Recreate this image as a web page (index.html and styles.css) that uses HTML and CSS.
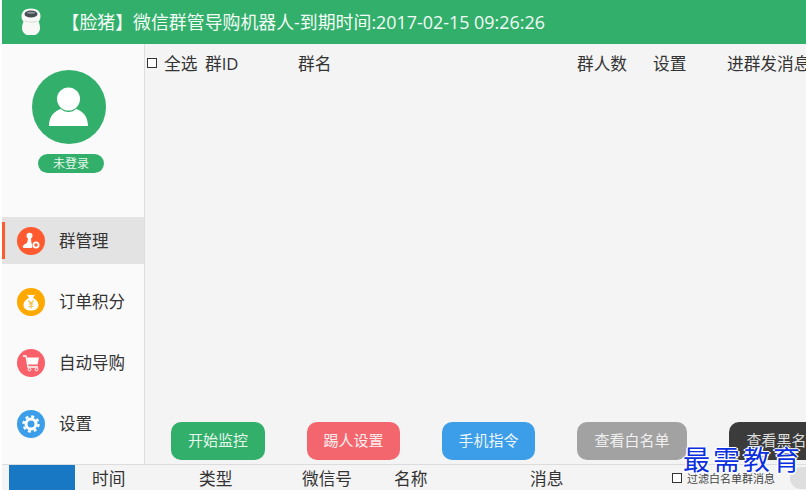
FILE: index.html
```html
<!DOCTYPE html>
<html lang="zh">
<head>
<meta charset="utf-8">
<title>脸猪</title>
<link rel="stylesheet" href="styles.css">
</head>
<body>
<div class="app">
  <header class="topbar">
    <svg class="logo" width="22" height="28" viewBox="0 0 22 28">
      <path d="M11 .5c6 0 9.500 3 9.500 7.500 0 3-1 4.500-2 5.500 1 2 1.500 4.500 1.500 7 0 3-2 5-4.500 6.500h-9C4 25.500 2 23.500 2 20.500c0-2.500.5-5 1.500-7-1-1-2-2.500-2-5.500C1.500 3.500 5 .5 11 .5z" fill="#f8f8f6"/>
      <path d="M5.500 12.500c3 1.500 8 1.500 11 0l.8 1c-3.500 1.600-9 1.600-12.600 0z" fill="#d9dedb"/>
      <ellipse cx="11" cy="6" rx="6.500" ry="3.600" fill="#454f53"/>
      <ellipse cx="11" cy="4.800" rx="4" ry="1" fill="#8d9699"/>
    </svg>
    <h1 class="title">【脸猪】微信群管导购机器人-到期时间:2017-02-15 09:26:26</h1>
  </header>
  <div class="middle">
    <aside class="sidebar">
      <div class="profile">
        <svg class="avatar" width="74" height="74" viewBox="0 0 74 74">
          <circle cx="37" cy="37" r="37" fill="#32af6b"/>
          <circle cx="36.500" cy="29" r="11.500" fill="#fff"/>
          <path d="M17 56c0-10 6-15.500 12-17 2 2 4.500 3 7.500 3s5.500-1 7.500-3c6 1.500 12 7 12 17z" fill="#fff"/>
        </svg>
        <span class="login">未登录</span>
      </div>
      <nav class="menu">
        <a class="menu-row active">
          <span class="icon icon-red">
            <svg width="28" height="28" viewBox="0 0 28 28"><circle cx="12.500" cy="8.800" r="3" fill="#fff"/><path d="M11 11h3l.3 4 1 4c.3 1.300-.3 2-1.200 2H7c-1 0-1.500-.8-1.200-1.700.6-1.800 2.700-2.300 4-3.300.8-1 1-3 1.200-5z" fill="#fff"/><circle cx="19" cy="18" r="2.600" fill="none" stroke="#fff" stroke-width="1.800"/></svg>
          </span>
          <span>群管理</span>
        </a>
        <a class="menu-row">
          <span class="icon icon-amber">
            <svg width="28" height="28" viewBox="0 0 28 28"><path d="M10 6.500c2 .8 6 .8 8 0l-2 3.500c3 1.400 5.500 4 5.500 7 0 3.500-3 5.500-7.500 5.500S6.500 20.500 6.500 17c0-3 2.500-5.600 5.500-7z" fill="#fff"/><path d="M11.500 12.500l2.500 3 2.500-3M11.500 16h5M11.500 18.500h5M14 15.500v5" fill="none" stroke="#f5c04e" stroke-width="1.200"/></svg>
          </span>
          <span>订单积分</span>
        </a>
        <a class="menu-row">
          <span class="icon icon-coral">
            <svg width="28" height="28" viewBox="0 0 28 28"><path d="M6 7h3l2 11h10" fill="none" stroke="#fff" stroke-width="1.300"/><path d="M10 8.500h12l-1.500 7H11z" fill="#fff"/><circle cx="12.500" cy="20.500" r="1.400" fill="none" stroke="#fff"/><circle cx="19.500" cy="20.500" r="1.400" fill="none" stroke="#fff"/></svg>
          </span>
          <span>自动导购</span>
        </a>
        <a class="menu-row">
          <span class="icon icon-blue">
            <svg width="28" height="28" viewBox="0 0 28 28"><circle cx="14" cy="14" r="5" fill="none" stroke="#fff" stroke-width="3"/><circle cx="14" cy="14" r="7.500" fill="none" stroke="#fff" stroke-width="2.400" stroke-dasharray="3 2.890"/></svg>
          </span>
          <span>设置</span>
        </a>
      </nav>
    </aside>
    <main class="content">
      <div class="table-head">
        <span class="check-cell"><i class="box"></i>全选</span>
        <span>群ID</span>
        <span>群名</span>
        <span>群人数</span>
        <span>设置</span>
        <span>进群发消息</span>
      </div>
      <div class="actions">
        <button class="btn btn-green">开始监控</button>
        <button class="btn btn-coral">踢人设置</button>
        <button class="btn btn-blue">手机指令</button>
        <button class="btn btn-grey">查看白名单</button>
        <button class="btn btn-dark">查看黑名单</button>
      </div>
    </main>
  </div>
  <footer class="logbar">
    <span class="log-tab"></span>
    <span class="log-col col-time">时间</span>
    <span class="log-col col-type">类型</span>
    <span class="log-col col-wx">微信号</span>
    <span class="log-col col-name">名称</span>
    <span class="log-col col-msg">消息</span>
    <span class="filter"><i class="box"></i>过滤白名单群消息</span>
    <span class="pill"></span>
  </footer>
  <div class="watermark">最需教育</div>
</div>
</body>
</html>
```
FILE: styles.css
```css
* { box-sizing: border-box; }
html, body { margin: 0; padding: 0; background: #fff; }
body { font-family: "Open Sans", "Noto Sans CJK SC", sans-serif; }
.app {
  position: relative;
  width: 806px;
  height: 490px;
  padding-left: 2px;
  display: flex;
  flex-direction: column;
  overflow: hidden;
  background: #fff;
}
.topbar {
  height: 44px;
  flex: none;
  background: #32af6b;
  display: flex;
  align-items: center;
  padding-left: 18px;
  color: #f2fbf6;
}
.logo { flex: none; margin-top: -1px; }
.title {
  margin: 0 0 3px 19.500px;
  font-size: 17.900px;
  font-weight: 400;
  white-space: nowrap;
}
.middle { flex: 1; display: flex; min-height: 0; }
.sidebar {
  width: 143px;
  flex: none;
  background: #fafafa;
  border-right: 1px solid #dedede;
  display: flex;
  flex-direction: column;
}
.profile {
  height: 173px;
  padding-top: 26px;
  display: flex;
  flex-direction: column;
}
.avatar { margin-left: 30px; flex: none; }
.login {
  width: 66px;
  height: 19px;
  margin: 10px 0 0 36px;
  border-radius: 10px;
  background: #32af6b;
  color: #e6f6ed;
  font-size: 12px;
  line-height: 19px;
  text-align: center;
}
.menu { display: flex; flex-direction: column; }
.menu-row {
  height: 47px;
  margin-bottom: 14px;
  padding-left: 15px;
  display: flex;
  align-items: center;
  gap: 14px;
  color: #333;
  font-size: 16.500px;
  line-height: 24px;
  position: relative;
}
.menu-row.active { background: #e3e3e3; }
.menu-row.active::before {
  content: "";
  position: absolute;
  left: 0;
  top: 5px;
  width: 2.500px;
  height: 37px;
  background: #ff5a30;
}
.icon { width: 28px; height: 28px; border-radius: 50%; flex: none; display: block; }
.icon svg { display: block; }
.icon-red { background: #ff5a30; }
.icon-amber { background: #ffa800; }
.icon-coral { background: #f9616a; }
.icon-blue { background: #3c9ee8; }
.content {
  flex: 1;
  min-width: 0;
  background: #f4f4f4;
  display: flex;
  flex-direction: column;
  justify-content: space-between;
}
.table-head {
  display: grid;
  grid-template-columns: 58px 93px 279px 76px 74px 90px;
  padding: 8px 0 0 2px;
  font-size: 16.700px;
  line-height: 24px;
  color: #333;
  white-space: nowrap;
}
.check-cell { display: flex; align-items: center; }
.box {
  display: block;
  width: 10px;
  height: 10px;
  border: 1px solid #333;
  background: #fff;
  flex: none;
}
.check-cell .box { margin: -3px 7px 0 0; }
.actions {
  display: flex;
  gap: 42px;
  padding: 0 0 4px 26px;
  width: 800px;
}
.btn {
  height: 38px;
  width: 93px;
  flex: none;
  border: 0;
  border-radius: 10px;
  font: inherit;
  font-size: 15px;
  line-height: 36px;
  padding: 0 0 2px;
  white-space: nowrap;
  overflow: hidden;
}
.btn-green { background: #32af6b; color: #e6f6ed; width: 94px; }
.btn-coral { background: #f4666e; color: #fdeeee; }
.btn-blue { background: #3c9ee8; color: #eaf5fd; }
.btn-grey { background: #a2a2a2; width: 110px; color: #f0f0f0; }
.btn-dark { background: #3b3b3b; width: 110px; color: #ddd; }
.logbar {
  height: 26px;
  flex: none;
  background: #f4f4f4;
  border-top: 1px solid #dcdcdc;
  display: flex;
  align-items: center;
  font-size: 16.700px;
  color: #333;
  white-space: nowrap;
  position: relative;
}
.log-tab { width: 66px; height: 25px; margin-left: 7px; background: #1878c4; flex: none; }
.log-col { flex: none; }
.col-time { margin-left: 17px; width: 107px; }
.col-type { width: 103px; }
.col-wx { width: 92px; }
.col-name { width: 136px; }
.col-msg { width: 142px; }
.filter {
  display: flex;
  align-items: center;
  font-size: 11px;
  color: #444;
  flex: none;
  width: 118px;
}
.filter .box { margin-right: 5px; }
.pill { width: 30px; height: 22px; border-radius: 11px; background: #dedede; flex: none; }
.watermark {
  position: absolute;
  left: 683px;
  top: 442px;
  font-family: "Noto Sans CJK SC", sans-serif;
  font-size: 27px;
  line-height: 34px;
  letter-spacing: 3px;
  color: #0a2fe0;
  white-space: nowrap;
  text-shadow: 1.500px 0 0 #fff, -1.500px 0 0 #fff, 0 1.500px 0 #fff, 0 -1.500px 0 #fff;
}
```
